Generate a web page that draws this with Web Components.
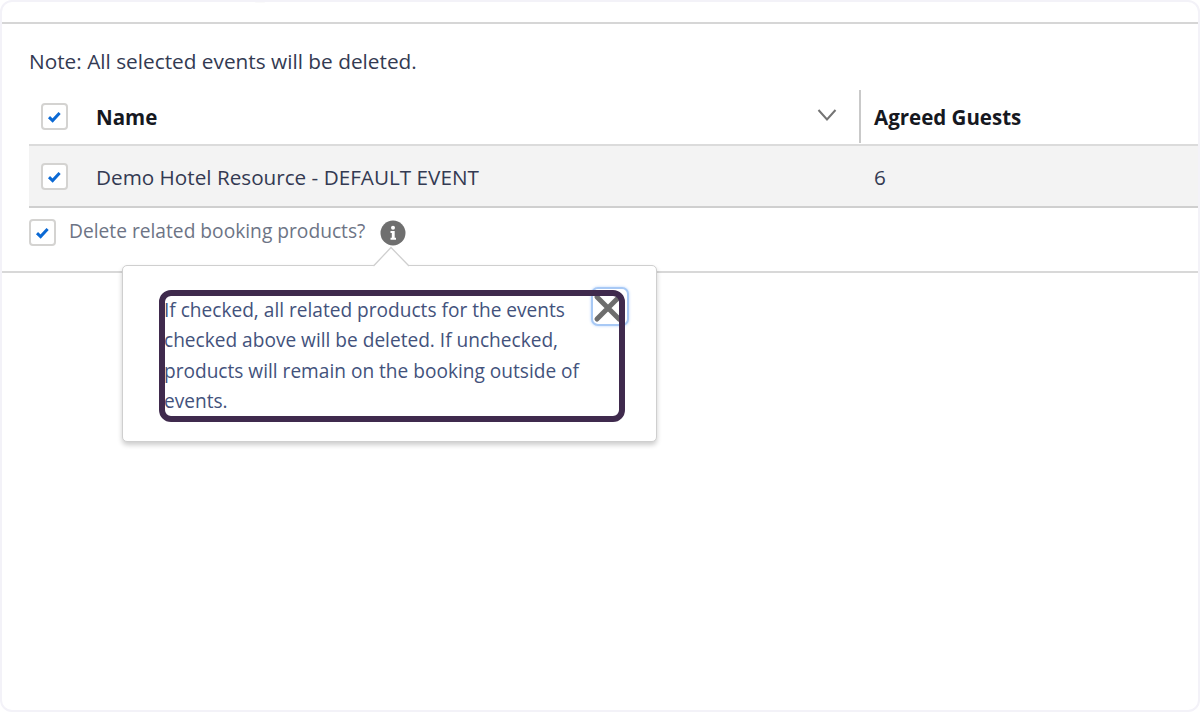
<!DOCTYPE html>
<html lang="en"><head><meta charset="utf-8"><title>Delete events</title>
<style>
html,body{margin:0;padding:0;background:#fff}
body{width:1200px;height:712px;overflow:hidden;font-family:"Open Sans","Noto Sans",sans-serif;color:#333a52}
</style></head><body>
<template id="t-frame"><style>
:host{display:flex;flex-direction:column;box-sizing:border-box;width:1200px;height:712px;border:2px solid #f3f2f8;border-radius:12px;position:relative;background:#fff;overflow:hidden}
.top{height:20px;border-bottom:2px solid #d6d6d6;flex:none}
.body{flex:none;padding:0 0 0 27px}
.bottom{border-bottom:2px solid #d8d8d8}
</style><div class="top"></div><div class="bottom"><div class="body"><slot></slot></div></div><slot name="over"></slot></template>

<template id="t-check"><style>
:host{display:block;flex:none;box-sizing:border-box;width:27px;height:27px;border:2px solid #d4d3d1;border-radius:4px;background:#fff}
svg{display:block;width:23px;height:23px}
</style><svg viewBox="0 0 23 23"><path d="M6 12.2l3.6 3.4 7-7.6" fill="none" stroke="#0b69d4" stroke-width="3" stroke-linejoin="miter"/></svg></template>

<template id="t-note"><style>
:host{display:block;height:66px;box-sizing:border-box;padding-top:22px;font-size:20.800px;line-height:30px;color:#333a52;white-space:nowrap}
</style><slot></slot></template>

<template id="t-table"><style>
:host{display:block;margin-right:0}
</style><slot></slot></template>

<template id="t-head"><style>
:host{display:flex;align-items:center;height:56px;border-bottom:2px solid #dbdbdb;padding-left:12px;box-sizing:border-box;font-weight:700;font-size:20.500px;color:#16181f;white-space:nowrap}
::slotted(ui-check){margin-top:-2px}
.name{flex:none;width:763px;margin-left:28px;display:flex;justify-content:space-between;align-items:center}
.chev{width:20px;height:14px;margin-right:22px;margin-top:-4px;display:block}
.div{flex:none;width:2px;height:53px;background:#c9c9c9;margin-top:-2px}
.guests{margin-left:13px}
</style><slot name="check"></slot><div class="name"><slot name="name"></slot><svg class="chev" viewBox="0 0 20 14"><path d="M1.500 2l8.500 9.500L18.500 2" fill="none" stroke="#747474" stroke-width="2"/></svg></div><div class="div"></div><div class="guests"><slot name="guests"></slot></div></template>

<template id="t-row"><style>
:host{display:flex;align-items:center;height:62px;border-bottom:2px solid #cfcfcf;padding-left:12px;box-sizing:border-box;background:#f3f3f3;font-size:20.700px;color:#333a52;white-space:nowrap}
.name{flex:none;width:763px;margin-left:28px;padding-top:2px}
.guests{margin-left:15px;padding-top:2px}
</style><slot name="check"></slot><div class="name"><slot name="name"></slot></div><div class="guests"><slot name="guests"></slot></div></template>

<template id="t-opt"><style>
:host{display:flex;align-items:flex-start;height:63px;box-sizing:border-box;padding-top:11px;font-size:19.200px;color:#6d7485;white-space:nowrap}
.l{margin-left:13px;line-height:25px;margin-top:-1px}
.i{margin-left:15px;margin-top:1px;width:26px;height:26px;flex:none;display:block}
</style><slot name="check"></slot><span class="l"><slot></slot></span><svg class="i" viewBox="0 0 26 26"><circle cx="13" cy="13" r="12.500" fill="#6f6f6f"/><circle cx="13" cy="7.800" r="2" fill="#fff"/><path d="M10.500 11h4.200v6.800h1.300v2h-5.500v-2h1.300v-4.800h-1.300z" fill="#fff"/></svg></template>

<template id="t-pop"><style>
:host{position:absolute;left:120px;top:263px;width:535px;height:177px;box-sizing:border-box;background:#fff;border:1px solid #cfcfcf;border-radius:5px;box-shadow:0 3px 5px rgba(0,0,0,.2);z-index:2}
.nub{position:absolute;left:248px;top:-20px;width:40px;height:21px;display:block}
.txt{position:absolute;left:41px;top:29px;width:436px;font-size:19.100px;line-height:30.300px;color:#43527c}
.close{position:absolute;left:468px;top:21px;width:38px;height:39px;box-sizing:border-box;border:2px solid #a8c9f5;border-radius:7px;box-shadow:0 0 3px #b9d5fb;background:#fff;padding:0;display:block}
.close svg{display:block;width:34px;height:35px;overflow:visible}
</style><svg class="nub" viewBox="0 0 40 21"><path d="M0 20h2.500L20 1.500 38 20h2v1H0z" fill="#fff"/><path d="M2.500 20L20 1.500 38 20" fill="none" stroke="#cfcfcf" stroke-width="1.300"/></svg><div class="txt"><slot></slot></div><button class="close" aria-label="Close" type="button"><svg viewBox="0 0 34 35"><path d="M4 8l22 22M26 8L4 30" stroke="#6d6d6d" stroke-width="5" stroke-linecap="round" fill="none"/></svg></button></template>

<template id="t-hl"><style>
:host{position:absolute;left:157px;top:288px;width:466px;height:132px;box-sizing:border-box;border:6px solid #3f2a4d;border-radius:12px;z-index:3;pointer-events:none}
</style></template>

<template id="t-notch"><style>
:host{position:absolute;left:252px;top:-2px;width:12px;height:3px;background:#fafafa;border-radius:0 0 5px 5px}
</style></template>

<app-frame>
 <note-line>Note: All selected events will be deleted.</note-line>
 <event-table>
  <head-row><ui-check slot="check"></ui-check><span slot="name">Name</span><span slot="guests">Agreed Guests</span></head-row>
  <data-row><ui-check slot="check"></ui-check><span slot="name">Demo Hotel Resource - DEFAULT EVENT</span><span slot="guests">6</span></data-row>
 </event-table>
 <option-line><ui-check slot="check"></ui-check>Delete related booking products?</option-line>
 <top-notch slot="over"></top-notch>
 <help-popover slot="over">If checked, all related products for the events checked above will be deleted. If unchecked, products will remain on the booking outside of events.</help-popover>
 <high-light slot="over"></high-light>
</app-frame>
<script>
const defs={'app-frame':'t-frame','ui-check':'t-check','note-line':'t-note','event-table':'t-table','head-row':'t-head','data-row':'t-row','option-line':'t-opt','help-popover':'t-pop','high-light':'t-hl','top-notch':'t-notch'};
for(const [name,id] of Object.entries(defs)){
 customElements.define(name,class extends HTMLElement{constructor(){super();this.attachShadow({mode:'open'}).appendChild(document.getElementById(id).content.cloneNode(true));}});
}
</script>
</body></html>
